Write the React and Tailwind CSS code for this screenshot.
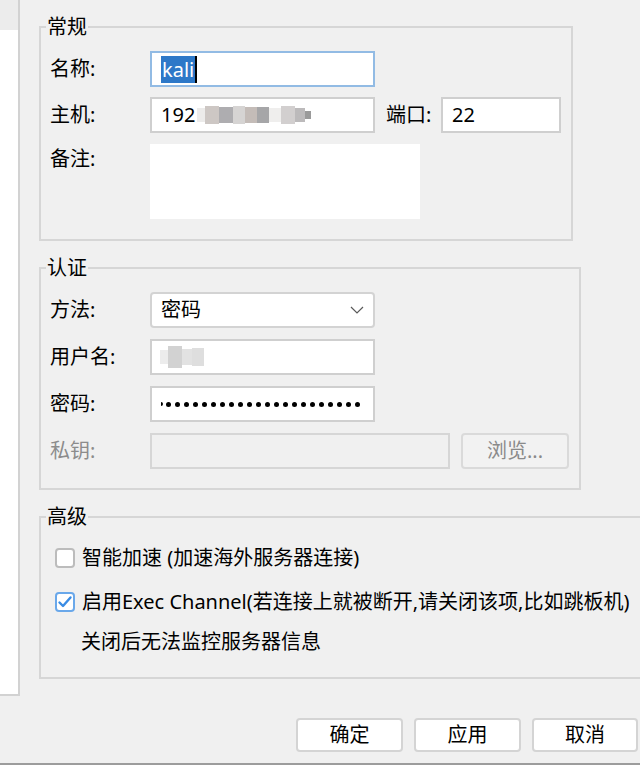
import React from "react";

function Checkbox({ checked }) {
  if (checked) {
    return (
      <div className="w-[20px] h-[20px] shrink-0 rounded-[4px] border-2 border-[#6aa8ea] bg-white flex items-center justify-center">
        <svg width="16" height="16" viewBox="0 0 16 16">
          <path d="M2.5 8.5 L6 12 L13.5 3.5" fill="none" stroke="#3a8ce4" strokeWidth="2.4" strokeLinecap="round" strokeLinejoin="round" />
        </svg>
      </div>
    );
  }
  return <div className="w-[20px] h-[20px] shrink-0 rounded-[4px] border-2 border-[#bcbcbc] bg-white" />;
}

function Legend({ children }) {
  return <legend className="ml-[5px] px-[1px] leading-[20px]">{children}</legend>;
}

export default function App() {
  const dots = Array.from({ length: 22 });
  return (
    <div className="w-[640px] h-[765px] overflow-hidden bg-[#f0f0f0] flex flex-col text-black text-[20px] font-['Noto_Sans','Noto_Sans_CJK_SC',sans-serif]">
      <div className="flex h-[696px] shrink-0">
        <div className="w-[20px] shrink-0 bg-white border-r-2 border-b-2 border-[#d2d2d2] flex flex-col">
          <div className="h-[30px] bg-[#ececec]" />
        </div>
        <div className="pl-[19px] flex flex-col shrink-0">
          {/* 常规 */}
          <fieldset className="mt-[17px] w-[534px] border-2 border-[#d6d6d6] p-0 m-0 min-w-0">
            <Legend>常规</Legend>
            <div className="pt-[14px] pl-[9px] pb-[20px] flex flex-col">
              <div className="flex items-center h-[36px]">
                <div className="w-[100px] leading-[24px]">名称:</div>
                <div className="w-[225px] h-[36px] bg-white border-2 border-[#92bbe4] flex items-center pl-[9px]">
                  <span className="bg-[#2d78c8] text-white leading-[27px] h-[27px] pl-[1px] pr-[1px]">kali</span>
                  <span className="w-[2px] h-[27px] bg-black" />
                </div>
              </div>
              <div className="flex items-center h-[36px] mt-[10px]">
                <div className="w-[100px] leading-[24px]">主机:</div>
                <div className="w-[225px] h-[36px] bg-white border-2 border-[#cfcfcf] flex items-center pl-[9px]">
                  <span className="leading-[24px]">192</span>
                  <div className="flex items-center ml-[2px] h-[20px]">
                    <div className="w-[8px] h-[14px] bg-[#ecebea]" />
                    <div className="w-[14px] h-[18px] bg-[#cdc7c4]" />
                    <div className="w-[14px] h-[16px] bg-[#aeadb0]" />
                    <div className="w-[12px] h-[18px] bg-[#d6d4d3]" />
                    <div className="w-[12px] h-[16px] bg-[#c4bcb8]" />
                    <div className="w-[12px] h-[16px] bg-[#a6a6a8]" />
                    <div className="w-[12px] h-[14px] bg-[#efeeed]" />
                    <div className="w-[14px] h-[18px] bg-[#d2cfcf]" />
                    <div className="w-[10px] h-[14px] bg-[#bcbabb]" />
                    <div className="w-[6px] h-[8px] bg-[#9a9a9a]" />
                  </div>
                </div>
                <div className="ml-[11px] w-[55px] leading-[24px]">端口:</div>
                <div className="w-[120px] h-[36px] bg-white border-2 border-[#cfcfcf] flex items-center pl-[9px]">
                  <span className="leading-[24px]">22</span>
                </div>
              </div>
              <div className="flex items-start mt-[11px]">
                <div className="w-[100px] leading-[28px] pt-[1px]">备注:</div>
                <div className="w-[270px] h-[75px] bg-white" />
              </div>
            </div>
          </fieldset>

          {/* 认证 */}
          <fieldset className="mt-[17px] w-[542px] border-2 border-[#d6d6d6] p-0 m-0 min-w-0">
            <Legend>认证</Legend>
            <div className="pt-[14px] pl-[9px] pb-[19px] flex flex-col gap-[11px]">
              <div className="flex items-center h-[36px]">
                <div className="w-[100px] leading-[24px]">方法:</div>
                <div className="w-[225px] h-[36px] bg-white border-2 border-[#d3d3d3] rounded-[4px] flex items-center pl-[9px] pr-[9px]">
                  <span className="leading-[24px] flex-1">密码</span>
                  <svg width="14" height="8" viewBox="0 0 14 8">
                    <polyline points="1,1 7,7 13,1" fill="none" stroke="#5a5a5a" strokeWidth="1.2" />
                  </svg>
                </div>
              </div>
              <div className="flex items-center h-[36px]">
                <div className="w-[100px] leading-[24px]">用户名:</div>
                <div className="w-[225px] h-[36px] bg-white border-2 border-[#cfcfcf] flex items-center pl-[8px]">
                  <div className="flex items-center h-[24px]">
                    <div className="w-[8px] h-[14px] bg-[#ececec]" />
                    <div className="w-[14px] h-[22px] bg-[#d2d2d2]" />
                    <div className="w-[10px] h-[16px] bg-[#e2e2e2]" />
                    <div className="w-[12px] h-[18px] bg-[#dedede]" />
                  </div>
                </div>
              </div>
              <div className="flex items-center h-[36px]">
                <div className="w-[100px] leading-[24px]">密码:</div>
                <div className="w-[225px] h-[36px] bg-white border-2 border-[#cfcfcf] flex items-center pl-[9px] overflow-hidden">
                  <span className="w-[2px] h-[4px] bg-black rounded-r-full mr-[3px]" />
                  <div className="flex items-center gap-[4px]">
                    {dots.map((_, i) => (
                      <span key={i} className="w-[5px] h-[5px] rounded-full bg-black" />
                    ))}
                  </div>
                </div>
              </div>
              <div className="flex items-center h-[36px]">
                <div className="w-[100px] leading-[24px] text-[#8c8c8c]">私钥:</div>
                <div className="w-[300px] h-[36px] bg-[#f0f0f0] border-2 border-[#d6d6d6]" />
                <div className="ml-[11px] w-[108px] h-[36px] rounded-[4px] border-2 border-[#dadada] bg-[#f2f2f2] flex items-center justify-center text-[#8a8a8a] leading-[24px]">
                  浏览...
                </div>
              </div>
            </div>
          </fieldset>

          {/* 高级 */}
          <fieldset className="mt-[17px] w-[640px] border-2 border-[#d6d6d6] p-0 m-0 min-w-0">
            <Legend>高级</Legend>
            <div className="pt-[19px] pl-[14px] pb-[23px] flex flex-col">
              <div className="flex items-center h-[24px] gap-[7px]">
                <Checkbox checked={false} />
                <span className="leading-[24px] whitespace-nowrap">智能加速 (加速海外服务器连接)</span>
              </div>
              <div className="flex items-center h-[24px] gap-[7px] mt-[20px]">
                <Checkbox checked={true} />
                <span className="leading-[24px] whitespace-nowrap">启用Exec Channel(若连接上就被断开,请关闭该项,比如跳板机)</span>
              </div>
              <div className="h-[24px] mt-[16px] pl-[26px] leading-[24px] whitespace-nowrap">关闭后无法监控服务器信息</div>
            </div>
          </fieldset>
        </div>
      </div>

      <div className="mt-[22px] flex justify-end gap-[11px] pr-[2px] shrink-0">
        <div className="w-[107px] h-[34px] rounded-[4px] border-2 border-[#d4d4d4] bg-white flex items-center justify-center leading-[24px]">确定</div>
        <div className="w-[107px] h-[34px] rounded-[4px] border-2 border-[#d4d4d4] bg-white flex items-center justify-center leading-[24px]">应用</div>
        <div className="w-[106px] h-[34px] rounded-[4px] border-2 border-[#d4d4d4] bg-white flex items-center justify-center leading-[24px]">取消</div>
      </div>
      <div className="flex-1" />
      <div className="h-[2px] bg-[#9c9c9c] shrink-0" />
    </div>
  );
}
